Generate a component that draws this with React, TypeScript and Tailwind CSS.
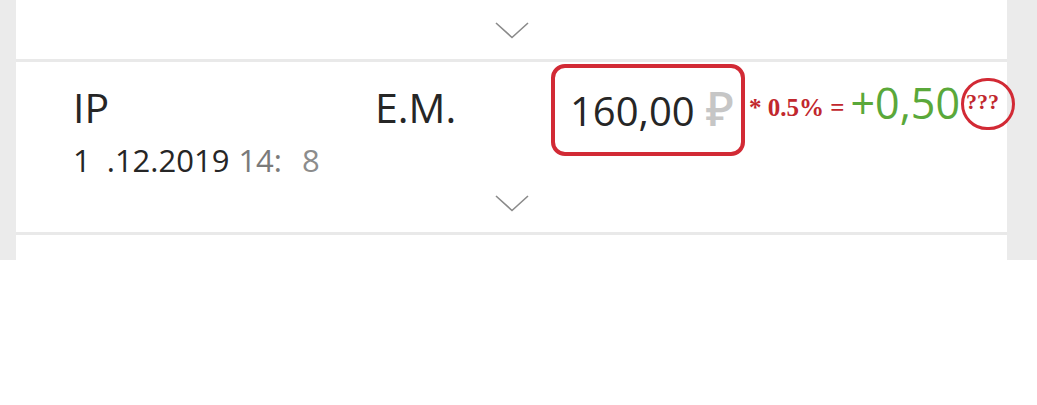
import React from "react";

function Chevron() {
  return (
    <svg width="34" height="17" viewBox="0 0 34 17" fill="none">
      <polyline points="1,1 17,15.5 33,1" stroke="#8a8a8a" strokeWidth="1.6" />
    </svg>
  );
}

export default function App() {
  return (
    <div className="h-[405px] w-[1037px] bg-white font-['Open_Sans','Noto_Sans','DejaVu_Sans',sans-serif]">
      <div className="flex h-[260px]">
        <div className="w-[16px] bg-[#ebebeb]" />
        <div className="flex flex-1 flex-col bg-white">
          {/* previous row tail */}
          <div className="flex h-[59px] justify-center pt-[22px]">
            <Chevron />
          </div>
          <div className="h-[3px] bg-[#e9e9e9]" />

          {/* transaction row */}
          <div className="flex h-[170px] flex-col">
            <div className="flex items-start pl-[57px]">
              <div className="w-[478px] pt-[21px]">
                <div className="flex text-[41px] leading-[48px] text-[#262626]">
                  <span className="w-[302px]">IP</span>
                  <span>E.M.</span>
                </div>
                <div className="mt-[9px] flex text-[31px] leading-[40px] text-[#262626]">
                  <span>1</span>
                  <span className="inline-block w-[16px]" />
                  <span>.12.2019</span>
                  <span className="ml-[9px] text-[#7a7a7a]">14:</span>
                  <span className="inline-block w-[20px]" />
                  <span className="text-[#8c8c8c]">8</span>
                </div>
              </div>

              <div className="mt-[2px] flex h-[92px] w-[194px] shrink-0 items-baseline rounded-[14px] border-4 border-[#d22a35] pl-[15px] pt-[16px] text-[40px] leading-[48px]">
                <span className="text-[#262626]">160,00</span>
                <span className="ml-[11px] text-[48px] font-medium leading-[48px] text-[#c6c6c6]">₽</span>
              </div>

              <span className="ml-[4px] mt-[32px] whitespace-pre font-['Liberation_Serif',serif] text-[25px] font-bold leading-[28px] text-[#c1272d]">
                * 0.5% =
              </span>
              <span className="ml-[6px] mt-[17px] text-[43px] leading-[48px] text-[#5aa83a]">+0,50</span>
              <span className="relative ml-[6px] mt-[28px] font-['Liberation_Serif',serif] text-[22px] font-bold leading-[24px] text-[#c1272d]">
                ???
                <span className="absolute left-[-5px] top-[-12px] h-[52px] w-[54px] rounded-full border-[3px] border-[#d22a35]" />
              </span>
            </div>
            <div className="mt-[15px] flex justify-center">
              <Chevron />
            </div>
          </div>
          <div className="h-[3px] bg-[#e9e9e9]" />
          <div className="flex-1" />
        </div>
        <div className="w-[30px] bg-[#ebebeb]" />
      </div>
    </div>
  );
}
